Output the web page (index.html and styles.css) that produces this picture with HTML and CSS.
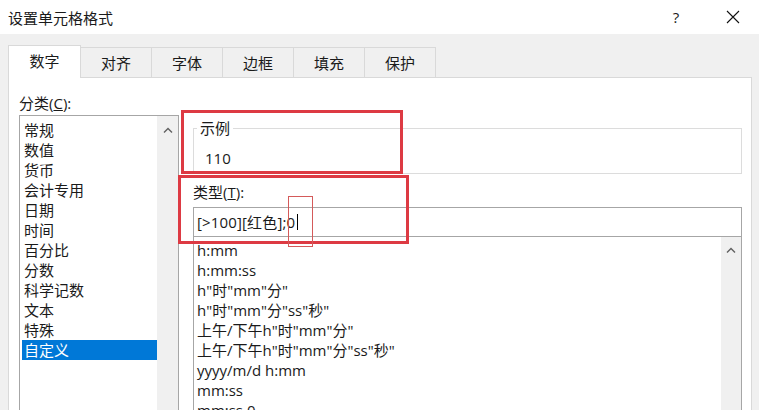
FILE: index.html
```html
<!DOCTYPE html>
<html lang="zh-CN">
<head>
<meta charset="utf-8">
<title>设置单元格格式</title>
<link rel="stylesheet" href="styles.css">
</head>
<body>
<div class="dialog">
  <div class="titlebar">
    <span class="title">设置单元格格式</span>
    <div class="tb-buttons">
      <span class="help">?</span>
      <span class="close"><svg width="14" height="14" viewBox="0 0 14 14"><path d="M1 1 L13 13 M13 1 L1 13" stroke="#111" stroke-width="1.1" fill="none"/></svg></span>
    </div>
  </div>
  <div class="tabs">
    <div class="tab active">数字</div>
    <div class="tab">对齐</div>
    <div class="tab">字体</div>
    <div class="tab">边框</div>
    <div class="tab">填充</div>
    <div class="tab">保护</div>
  </div>
  <div class="panel">
    <div class="left">
      <div class="label">分类(<u>C</u>):</div>
      <div class="catlist">
        <ul class="items">
          <li>常规</li>
          <li>数值</li>
          <li>货币</li>
          <li>会计专用</li>
          <li>日期</li>
          <li>时间</li>
          <li>百分比</li>
          <li>分数</li>
          <li>科学记数</li>
          <li>文本</li>
          <li>特殊</li>
          <li class="selected">自定义</li>
        </ul>
        <div class="scrollbar"><svg class="arrow" width="10" height="6" viewBox="0 0 10 6"><path d="M1 5.5 L5 1.5 L9 5.5" stroke="#606060" stroke-width="1.4" fill="none"/></svg></div>
      </div>
    </div>
    <div class="right">
      <fieldset class="sample">
        <legend>示例</legend>
        <div class="sample-value">110</div>
      </fieldset>
      <div class="label type-label">类型(<u>T</u>):</div>
      <div class="type-input">[&gt;100][红色];0<span class="caret"></span></div>
      <div class="typelist">
        <ul class="items">
          <li>h:mm</li>
          <li>h:mm:ss</li>
          <li>h"时"mm"分"</li>
          <li>h"时"mm"分"ss"秒"</li>
          <li>上午/下午h"时"mm"分"</li>
          <li>上午/下午h"时"mm"分"ss"秒"</li>
          <li>yyyy/m/d h:mm</li>
          <li>mm:ss</li>
          <li>mm:ss.0</li>
        </ul>
        <div class="scrollbar"><svg class="arrow" width="10" height="6" viewBox="0 0 10 6"><path d="M1 5.5 L5 1.5 L9 5.5" stroke="#606060" stroke-width="1.4" fill="none"/></svg></div>
      </div>
    </div>
  </div>
  <div class="mark mark-sample"></div>
  <div class="mark mark-type"></div>
  <div class="mark-thin"></div>
</div>
</body>
</html>
```
FILE: styles.css
```css
html, body {
  margin: 0;
  padding: 0;
}
body {
  width: 759px;
  height: 410px;
  overflow: hidden;
  background: #f0f0f0;
  font-family: "Open Sans", "Noto Sans CJK SC", sans-serif;
  font-size: 15px;
  color: #1a1a1a;
}
.dialog {
  position: relative;
  width: 759px;
  height: 410px;
  overflow: hidden;
  background: #f0f0f0;
}
.titlebar {
  height: 34px;
  background: #ffffff;
  display: flex;
  align-items: center;
  justify-content: space-between;
  padding-left: 8px;
  box-sizing: border-box;
}
.title {
  font-size: 15px;
  line-height: 20px;
  margin-top: 1px;
}
.tb-buttons {
  display: flex;
  align-items: center;
  height: 100%;
}
.help {
  width: 30px;
  text-align: center;
  font-size: 15px;
  margin-right: 21px;
}
.close {
  width: 46px;
  height: 34px;
  display: flex;
  align-items: center;
  justify-content: center;
  margin-right: 1px;
}
.close svg {
  margin-left: -4px;
}
.tabs {
  display: flex;
  align-items: flex-end;
  padding-left: 8px;
  margin-top: 11px;
  height: 33px;
  position: relative;
  z-index: 2;
}
.tab {
  width: 72px;
  height: 30px;
  box-sizing: border-box;
  border: 1px solid #d9d9d9;
  border-bottom: none;
  margin-left: -1px;
  display: flex;
  align-items: center;
  justify-content: center;
  background: #f0f0f0;
  font-size: 15px;
  margin-bottom: 1px;
}
.tab:first-child {
  margin-left: 0;
}
.tab.active {
  height: 33px;
  background: #ffffff;
  margin-bottom: 0;
  padding-bottom: 3px;
  width: 73px;
}
.tab.active + .tab {
  margin-left: -1px;
}
.panel {
  margin-left: 8px;
  margin-top: -1px;
  width: 744px;
  height: 340px;
  box-sizing: border-box;
  background: #ffffff;
  border: 1px solid #d9d9d9;
  display: flex;
  padding: 15px 9px 0 10px;
  gap: 14px;
  position: relative;
  z-index: 1;
}
.label {
  line-height: 20px;
  height: 20px;
}
.left {
  width: 160px;
  flex: none;
}
.catlist {
  margin-top: 2px;
  height: 320px;
  border: 1px solid #a6a6a6;
  border-bottom: none;
  display: flex;
}
.items {
  list-style: none;
  margin: 0;
  padding: 4px 0 0 2px;
  flex: 1;
}
.items li {
  line-height: 20px;
  height: 20px;
  padding-left: 2px;
  white-space: nowrap;
}
.items li.selected {
  background: #0078d7;
  color: #ffffff;
}
.scrollbar {
  width: 21px;
  flex: none;
  background: #f0f0f0;
  display: flex;
  justify-content: center;
  padding-top: 11px;
  box-sizing: border-box;
}
.arrow {
  display: block;
}
.right {
  flex: 1;
  display: flex;
  flex-direction: column;
  padding-top: 26px;
}
.sample {
  margin: 0;
  border: 1px solid #dcdcdc;
  padding: 0 0 6px 3px;
  height: 55px;
  box-sizing: border-box;
}
.sample legend {
  padding: 0 3px;
  line-height: 18px;
  font-size: 15px;
}
.sample-value {
  line-height: 20px;
  margin-top: 11px;
  padding-left: 8px;
}
.type-label {
  margin-top: 8px;
}
.type-input {
  margin-top: 5px;
  height: 30px;
  box-sizing: border-box;
  border: 1px solid #a6a6a6;
  padding-left: 3px;
  line-height: 28px;
  display: flex;
  align-items: center;
  letter-spacing: 0.15px;
}
.caret {
  display: inline-block;
  width: 1px;
  height: 16px;
  background: #000000;
  margin-left: 2px;
}
.typelist {
  height: 200px;
  border: 1px solid #a6a6a6;
  border-top: none;
  display: flex;
}
.typelist .items {
  padding: 3px 0 0 3px;
}
.typelist .items li {
  padding-left: 0;
}
.typelist .scrollbar {
  width: 20px;
  padding-top: 10px;
}
.mark {
  position: absolute;
  box-sizing: border-box;
  border: 3px solid #dd3a43;
  z-index: 5;
}
.mark-sample {
  left: 181px;
  top: 110px;
  width: 222px;
  height: 64px;
}
.mark-type {
  left: 178px;
  top: 175px;
  width: 231px;
  height: 69px;
}
.mark-thin {
  position: absolute;
  box-sizing: border-box;
  border: 1px solid #d45a5a;
  left: 288px;
  top: 196px;
  width: 25px;
  height: 51px;
  z-index: 5;
}
```
